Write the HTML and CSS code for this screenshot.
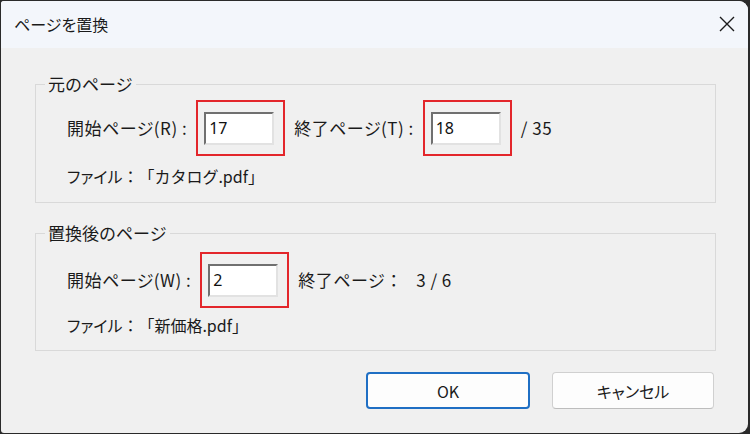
FILE: index.html
```html
<!DOCTYPE html>
<html lang="ja">
<head>
<meta charset="utf-8">
<title>ページを置換</title>
<link rel="stylesheet" href="styles.css">
</head>
<body>
<div class="window">
  <div class="titlebar">
    <span class="title">ページを置換</span>
    <svg class="close" width="16" height="16" viewBox="0 0 16 16"><path d="M1 1 L15 15 M15 1 L1 15" stroke="#1b1b1b" stroke-width="1.4" fill="none"/></svg>
  </div>
  <div class="content">
    <fieldset class="group group-src">
      <legend>元のページ</legend>
      <div class="row">
        <span class="label">開始ページ(R) :</span>
        <span class="mark"><span class="input">17</span></span>
        <span class="label label-after">終了ページ(T) :</span>
        <span class="mark"><span class="input">18</span></span>
        <span class="label label-after">/ 35</span>
      </div>
      <div class="file"><span class="kana">ファイル</span>：「カタログ.pdf」</div>
    </fieldset>
    <fieldset class="group group-dst">
      <legend>置換後のページ</legend>
      <div class="row">
        <span class="label">開始ページ(W) :</span>
        <span class="mark"><span class="input">2</span></span>
        <span class="label label-after">終了ページ<span class="fw">：</span></span>
        <span class="label value">3 / 6</span>
      </div>
      <div class="file"><span class="kana">ファイル</span>：「新価格.pdf」</div>
    </fieldset>
    <div class="buttons">
      <button class="btn btn-ok">OK</button>
      <button class="btn">キャンセル</button>
    </div>
  </div>
</div>
</body>
</html>
```

FILE: styles.css
```css
html, body {
  margin: 0;
  padding: 0;
}
body {
  background: #2a2a2a;
  width: 750px;
  height: 434px;
  overflow: hidden;
  font-family: "Noto Sans CJK JP", "Noto Sans", sans-serif;
  color: #1a1a1a;
  text-spacing-trim: space-all;
}
.window {
  margin: 1px 2px 1px 1px;
  height: 432px;
  background: #f0f0f0;
  border-radius: 3px 9px 9px 3px;
  overflow: hidden;
}
.titlebar {
  height: 47px;
  background: #f3f6fb;
  display: flex;
  align-items: center;
  justify-content: space-between;
  padding: 0 13px 0 13px;
}
.title {
  font-size: 16px;
  line-height: 20px;
  margin-top: -1px;
  font-feature-settings: "palt";
}
.close {
  display: block;
  margin-top: -1px;
}
.content {
  padding: 26px 32px 0 34px;
}
.group {
  margin: 0;
  border: 1px solid #d9d9d9;
  padding: 6px 0 16px 0;
  min-width: 0;
}
.group legend {
  font-size: 17px;
  line-height: 20px;
  padding: 0 3px;
  margin-left: 9px;
}
.group-dst {
  margin-top: 20px;
  padding-top: 9px;
  padding-bottom: 15px;
}
.row {
  display: flex;
  align-items: center;
  height: 56px;
  font-size: 17px;
  padding-left: 31px;
}
.label {
  line-height: 20px;
  white-space: nowrap;
  font-feature-settings: "palt";
  letter-spacing: 0.5px;
}
.label .fw {
  font-feature-settings: normal;
  letter-spacing: 0;
}
.label-after {
  margin-left: 9px;
}
.value {
  margin-left: 14px;
}
.mark {
  margin-left: 9px;
  border: 2px solid #e3262b;
  padding: 10px 9px 9px 6px;
}
.input {
  display: block;
  box-sizing: border-box;
  width: 70px;
  height: 33px;
  background: #ffffff;
  border-top: 2px solid #707070;
  border-left: 2px solid #707070;
  border-right: 2px solid #e2e2e2;
  border-bottom: 2px solid #e2e2e2;
  font-family: "Noto Sans", "Noto Sans CJK JP", sans-serif;
  font-size: 16px;
  line-height: 28px;
  padding-left: 3px;
  color: #111;
}
.file {
  font-size: 16px;
  line-height: 20px;
  margin-top: 10px;
  padding-left: 31px;
}
.file .kana {
  font-feature-settings: "palt";
}
.group-dst .file {
  margin-top: 7px;
}
.buttons {
  display: flex;
  justify-content: flex-end;
  gap: 22px;
  margin-top: 21px;
  padding-right: 2px;
}
.btn {
  box-sizing: border-box;
  width: 162px;
  height: 37px;
  background: #fdfdfd;
  border: 1px solid #d0d0d0;
  border-bottom-color: #bdbdbd;
  border-radius: 4px;
  font-family: "Noto Sans CJK JP", "Noto Sans", sans-serif;
  font-size: 16px;
  color: #1a1a1a;
  padding: 0;
  font-feature-settings: "palt";
}
.btn-ok {
  width: 164px;
  border: 2px solid #1f6fc4;
}
```
